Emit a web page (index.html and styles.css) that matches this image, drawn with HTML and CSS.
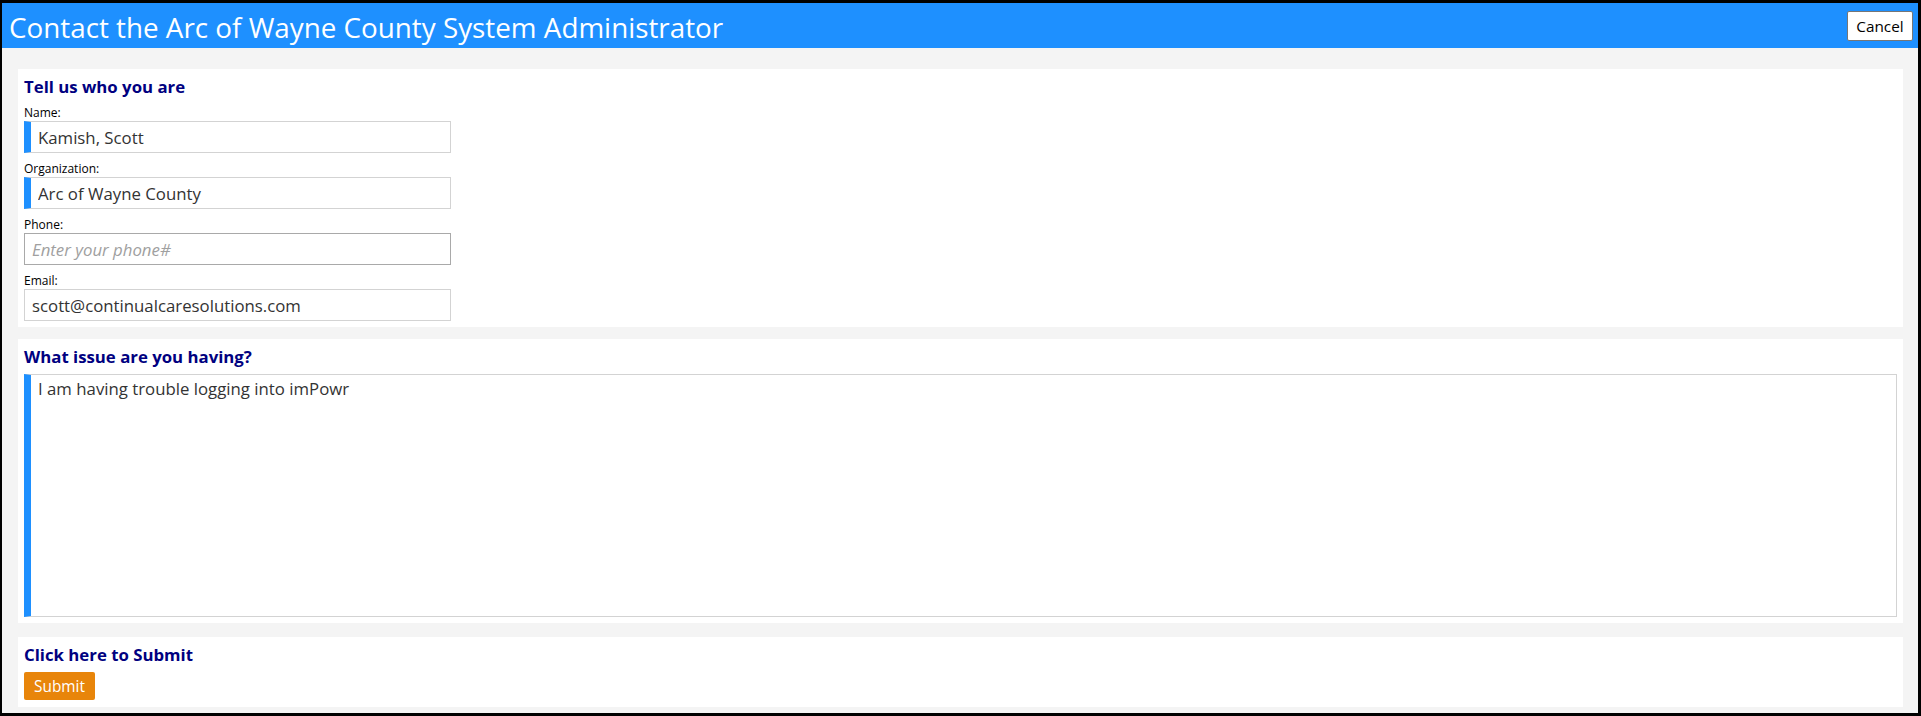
FILE: index.html
```html
<!DOCTYPE html>
<html lang="en">

<head>
    <meta charset="UTF-8">
    <meta name="viewport" content="width=device-width, initial-scale=1.0">
    <title>Contact System Administrator</title>
    <link rel="stylesheet" href="styles.css">
</head>

<body>
    <div class="window">
        <div class="header">
            <h1>Contact the Arc of Wayne County System Administrator</h1>
            <button type="button" class="cancel-btn">Cancel</button>
        </div>

        <form class="content" id="contact-form">
            <!-- Who is sending the request -->
            <div class="panel">
                <h2>Tell us who you are</h2>
                <div class="form-group">
                    <label for="name">Name:</label>
                    <input type="text" id="name" class="required" value="Kamish, Scott">
                </div>
                <div class="form-group">
                    <label for="organization">Organization:</label>
                    <input type="text" id="organization" class="required" value="Arc of Wayne County">
                </div>
                <div class="form-group">
                    <label for="phone">Phone:</label>
                    <input type="text" id="phone" class="phone" placeholder="Enter your phone#">
                </div>
                <div class="form-group">
                    <label for="email">Email:</label>
                    <input type="text" id="email" value="scott@continualcaresolutions.com">
                </div>
            </div>

            <!-- Description of the problem -->
            <div class="panel">
                <h2>What issue are you having?</h2>
                <textarea id="issue" class="required">I am having trouble logging into imPowr</textarea>
            </div>

            <div class="panel submit-panel">
                <h2>Click here to Submit</h2>
                <button type="submit" class="submit-btn">Submit</button>
            </div>
        </form>
    </div>
</body>

</html>
```

FILE: styles.css
```css
* {
    box-sizing: border-box;
}

body {
    margin: 0;
    font-family: "Open Sans", "Noto Sans", sans-serif;
}

.window {
    height: 716px;
    border-style: solid;
    border-color: #000;
    border-width: 3px 3px 3px 2px;
    background-color: #f4f4f4;
    display: flex;
    flex-direction: column;
}

.header {
    height: 45px;
    background-color: #1e90ff;
    display: flex;
    justify-content: space-between;
    align-items: center;
    padding: 0 5px 0 7px;
}

.header h1 {
    margin: 0;
    padding-top: 3px;
    color: #fff;
    font-size: 27.8px;
    font-weight: 400;
    line-height: 42px;
}

.cancel-btn {
    width: 66px;
    height: 30px;
    background-color: #fff;
    border: 1px solid #767676;
    border-radius: 2px;
    font-family: inherit;
    font-size: 15.3px;
    color: #000;
    padding: 0;
    cursor: pointer;
}

.content {
    flex: 1;
    padding: 21px 15px 6px 16px;
    display: flex;
    flex-direction: column;
    gap: 12px;
}

.panel {
    background-color: #fff;
    padding: 6px 6px 6px 6px;
}

.panel h2 {
    margin: 0 0 5px;
    color: #000080;
    font-size: 16.8px;
    line-height: 24px;
    font-weight: 700;
}

.form-group {
    margin-bottom: 7px;
}

.form-group:last-child {
    margin-bottom: 0;
}

.form-group label {
    display: block;
    font-size: 12px;
    line-height: 17px;
    color: #000;
}

.form-group input {
    display: block;
    width: 427px;
    height: 32px;
    padding: 0 7px;
    border: 1px solid #d3d3d3;
    font-family: inherit;
    font-size: 16.8px;
    color: #333;
    outline: none;
}

.form-group input.phone {
    border-color: #a9a9a9;
}

.form-group input::placeholder {
    color: #a0a0a0;
    font-style: italic;
}

.required {
    border-left: 7px solid #1e90ff !important;
}

textarea {
    display: block;
    width: 100%;
    height: 243px;
    padding: 2px 7px;
    border: 1px solid #d3d3d3;
    font-family: inherit;
    font-size: 16.8px;
    color: #333;
    resize: none;
    outline: none;
}

.submit-panel {
    margin-top: 2px;
    padding-bottom: 7px;
}

.submit-btn {
    display: block;
    width: 71px;
    height: 28px;
    padding: 0;
    background-color: #e8850a;
    color: #fff;
    border: none;
    border-radius: 2px;
    font-family: inherit;
    font-size: 15.4px;
    cursor: pointer;
}

.submit-btn:hover {
    opacity: 0.9;
}
```
